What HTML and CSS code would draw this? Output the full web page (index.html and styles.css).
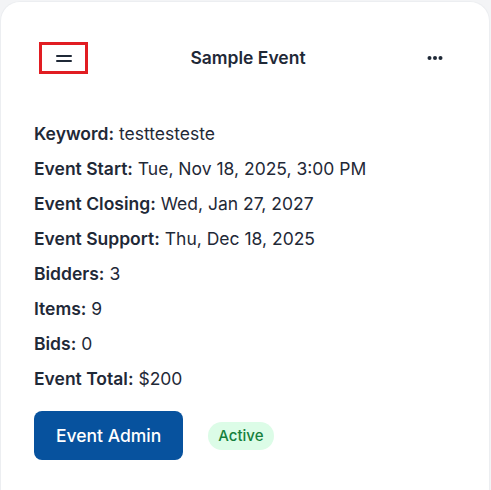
FILE: index.html
```html
<!DOCTYPE html>
<html lang="en">
<head>
<meta charset="utf-8">
<title>Sample Event</title>
<link rel="stylesheet" href="styles.css">
</head>
<body>
<div class="card">
  <div class="header">
    <button class="menu-btn" type="button" aria-label="Menu">
      <svg width="16" height="8" viewBox="0 0 16 8" aria-hidden="true">
        <rect x="0" y="0" width="16" height="2" rx="1" fill="#1f2937"/>
        <rect x="0" y="5" width="16" height="2" rx="1" fill="#1f2937"/>
      </svg>
    </button>
    <h2 class="title">Sample Event</h2>
    <button class="more-btn" type="button" aria-label="More">
      <svg width="16" height="4" viewBox="0 0 16 4" aria-hidden="true">
        <circle cx="2.5" cy="2" r="2" fill="#1f2937"/>
        <circle cx="8" cy="2" r="2" fill="#1f2937"/>
        <circle cx="13.5" cy="2" r="2" fill="#1f2937"/>
      </svg>
    </button>
  </div>
  <ul class="details">
    <li><strong>Keyword:</strong> testtesteste</li>
    <li><strong>Event Start:</strong> Tue, Nov 18, 2025, 3:00 PM</li>
    <li><strong>Event Closing:</strong> Wed, Jan 27, 2027</li>
    <li><strong>Event Support:</strong> Thu, Dec 18, 2025</li>
    <li><strong>Bidders:</strong> 3</li>
    <li><strong>Items:</strong> 9</li>
    <li><strong>Bids:</strong> 0</li>
    <li><strong>Event Total:</strong> $200</li>
  </ul>
  <div class="actions">
    <button class="admin-btn" type="button">Event Admin</button>
    <span class="badge">Active</span>
  </div>
</div>
</body>
</html>
```
FILE: styles.css
```css
* { box-sizing: border-box; }
html, body { height: 100%; }
body {
  margin: 0;
  background: #f3f4f6;
  font-family: Inter, "Noto Sans", sans-serif;
  color: #1f2937;
  overflow: hidden;
}
.card {
  margin-top: 1px;
  width: 490px;
  height: 489px;
  background: #ffffff;
  border: 1px solid #eceef1;
  border-bottom: 0;
  border-radius: 20px 20px 0 0;
  padding: 40px 32px 0 33px;
}
.header {
  display: grid;
  grid-template-columns: 1fr auto 1fr;
  align-items: center;
  margin-left: 5px;
}
.menu-btn {
  justify-self: start;
  width: 49px;
  height: 32px;
  border: 3px solid #e11d22;
  background: #ffffff;
  padding: 0;
  display: flex;
  align-items: center;
  justify-content: center;
  cursor: pointer;
}
.menu-btn svg { display: block; margin-top: 1px; }
.title {
  margin: 0;
  font-size: 17.5px;
  font-weight: 600;
  line-height: 24px;
  color: #1f2937;
}
.more-btn {
  justify-self: end;
  width: 24px;
  height: 24px;
  margin-right: 10px;
  border: 0;
  background: transparent;
  padding: 0;
  display: flex;
  align-items: center;
  justify-content: center;
  cursor: pointer;
}
.more-btn svg { display: block; }
.details {
  list-style: none;
  margin: 48px 0 0 0;
  padding: 0;
  display: flex;
  flex-direction: column;
  gap: 11px;
}
.details li {
  font-size: 17.5px;
  line-height: 24px;
  color: #1f2937;
}
.details strong { font-weight: 600; }
.actions {
  margin-top: 20px;
  display: flex;
  align-items: center;
  gap: 25px;
}
.admin-btn {
  height: 49px;
  padding: 0 22px;
  border: 0;
  border-radius: 8px;
  background: #07529e;
  color: #ffffff;
  font-family: Inter, "Noto Sans", sans-serif;
  font-size: 17.5px;
  font-weight: 500;
  cursor: pointer;
}
.badge {
  display: inline-flex;
  align-items: center;
  height: 28px;
  padding: 0 10px;
  border-radius: 999px;
  background: #dcfce7;
  color: #15803d;
  font-size: 15px;
  font-weight: 500;
}
```
